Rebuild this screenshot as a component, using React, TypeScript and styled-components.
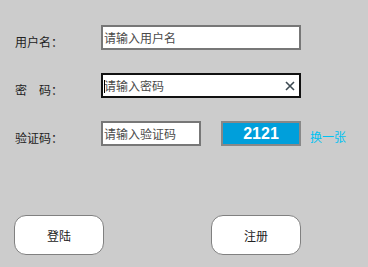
import React, { useState } from "react";
import styled, { createGlobalStyle } from "styled-components";

const GlobalStyle = createGlobalStyle`
  html, body {
    margin: 0;
    padding: 0;
    background: #cccccc;
    font-family: "Noto Sans CJK SC", "DejaVu Sans", sans-serif;
  }
`;

const Page = styled.div`
  width: 368px;
  height: 267px;
  box-sizing: border-box;
  padding: 25px 0 0 15px;
  display: flex;
  flex-direction: column;
`;

const Form = styled.div`
  display: flex;
  flex-direction: column;
  gap: 23px;
`;

const Row = styled.div`
  display: flex;
  align-items: center;
  height: 25px;
`;

const Label = styled.div`
  width: 86px;
  font-size: 12px;
  color: #222;
  padding-top: 7px;
  white-space: pre;
`;

const InputBox = styled.div<{ $w: number; $focus?: boolean }>`
  position: relative;
  width: ${(p) => p.$w}px;
  height: 25px;
  box-sizing: border-box;
  background: #fff;
  border: ${(p) => (p.$focus ? "1px solid #111" : "1px solid #777")};
  box-shadow: ${(p) => (p.$focus ? "inset 0 0 0 1px #111" : "inset 0 0 0 1px #777")};
  display: flex;
  align-items: center;
`;

const Input = styled.input`
  border: none;
  outline: none;
  background: transparent;
  flex: 1;
  min-width: 0;
  height: 100%;
  padding: 0 0 0 2px;
  font-family: "Noto Sans CJK SC", sans-serif;
  font-size: 12px;
  color: #333;
  &::placeholder {
    color: #4a4a4a;
  }
`;

const Caret = styled.span`
  position: absolute;
  left: 2px;
  top: 6px;
  width: 1px;
  height: 13px;
  background: #000;
`;

const Clear = styled.button`
  border: none;
  background: none;
  padding: 0;
  margin-right: 5px;
  width: 10px;
  height: 10px;
  display: flex;
  cursor: pointer;
`;

const Captcha = styled.div`
  margin-left: 20px;
  width: 80px;
  height: 25px;
  box-sizing: border-box;
  background: #009fdb;
  border: 1px solid #888;
  box-shadow: inset 0 0 0 1px #888;
  color: #fff;
  font-family: "Liberation Sans", Arial, sans-serif;
  font-weight: bold;
  font-size: 16px;
  display: flex;
  align-items: center;
  justify-content: center;
`;

const Refresh = styled.a`
  margin-left: 9px;
  padding-top: 5px;
  font-size: 12px;
  color: #00c2f2;
  cursor: pointer;
`;

const Actions = styled.div`
  margin: 69px 0 0 -1px;
  display: flex;
  gap: 107px;
`;

const Button = styled.button`
  width: 90px;
  height: 40px;
  box-sizing: border-box;
  background: #fff;
  border: 1px solid #808080;
  border-radius: 12px;
  font-family: "Noto Sans CJK SC", sans-serif;
  font-size: 12px;
  color: #222;
  cursor: pointer;
`;

export default function App() {
  const [pwd, setPwd] = useState("");
  return (
    <>
      <GlobalStyle />
      <Page>
        <Form>
          <Row>
            <Label>用户名：</Label>
            <InputBox $w={200}>
              <Input placeholder="请输入用户名" />
            </InputBox>
          </Row>
          <Row>
            <Label>密　码：</Label>
            <InputBox $w={200} $focus>
              <Caret />
              <Input
                type="password"
                placeholder="请输入密码"
                value={pwd}
                onChange={(e) => setPwd(e.target.value)}
              />
              <Clear onClick={() => setPwd("")}>
                <svg width="10" height="10" viewBox="0 0 10 10">
                  <path d="M1 1L9 9M9 1L1 9" stroke="#3d4a52" strokeWidth="1.6" />
                </svg>
              </Clear>
            </InputBox>
          </Row>
          <Row>
            <Label>验证码：</Label>
            <InputBox $w={100}>
              <Input placeholder="请输入验证码" />
            </InputBox>
            <Captcha>2121</Captcha>
            <Refresh>换一张</Refresh>
          </Row>
        </Form>
        <Actions>
          <Button>登陆</Button>
          <Button>注册</Button>
        </Actions>
      </Page>
    </>
  );
}
